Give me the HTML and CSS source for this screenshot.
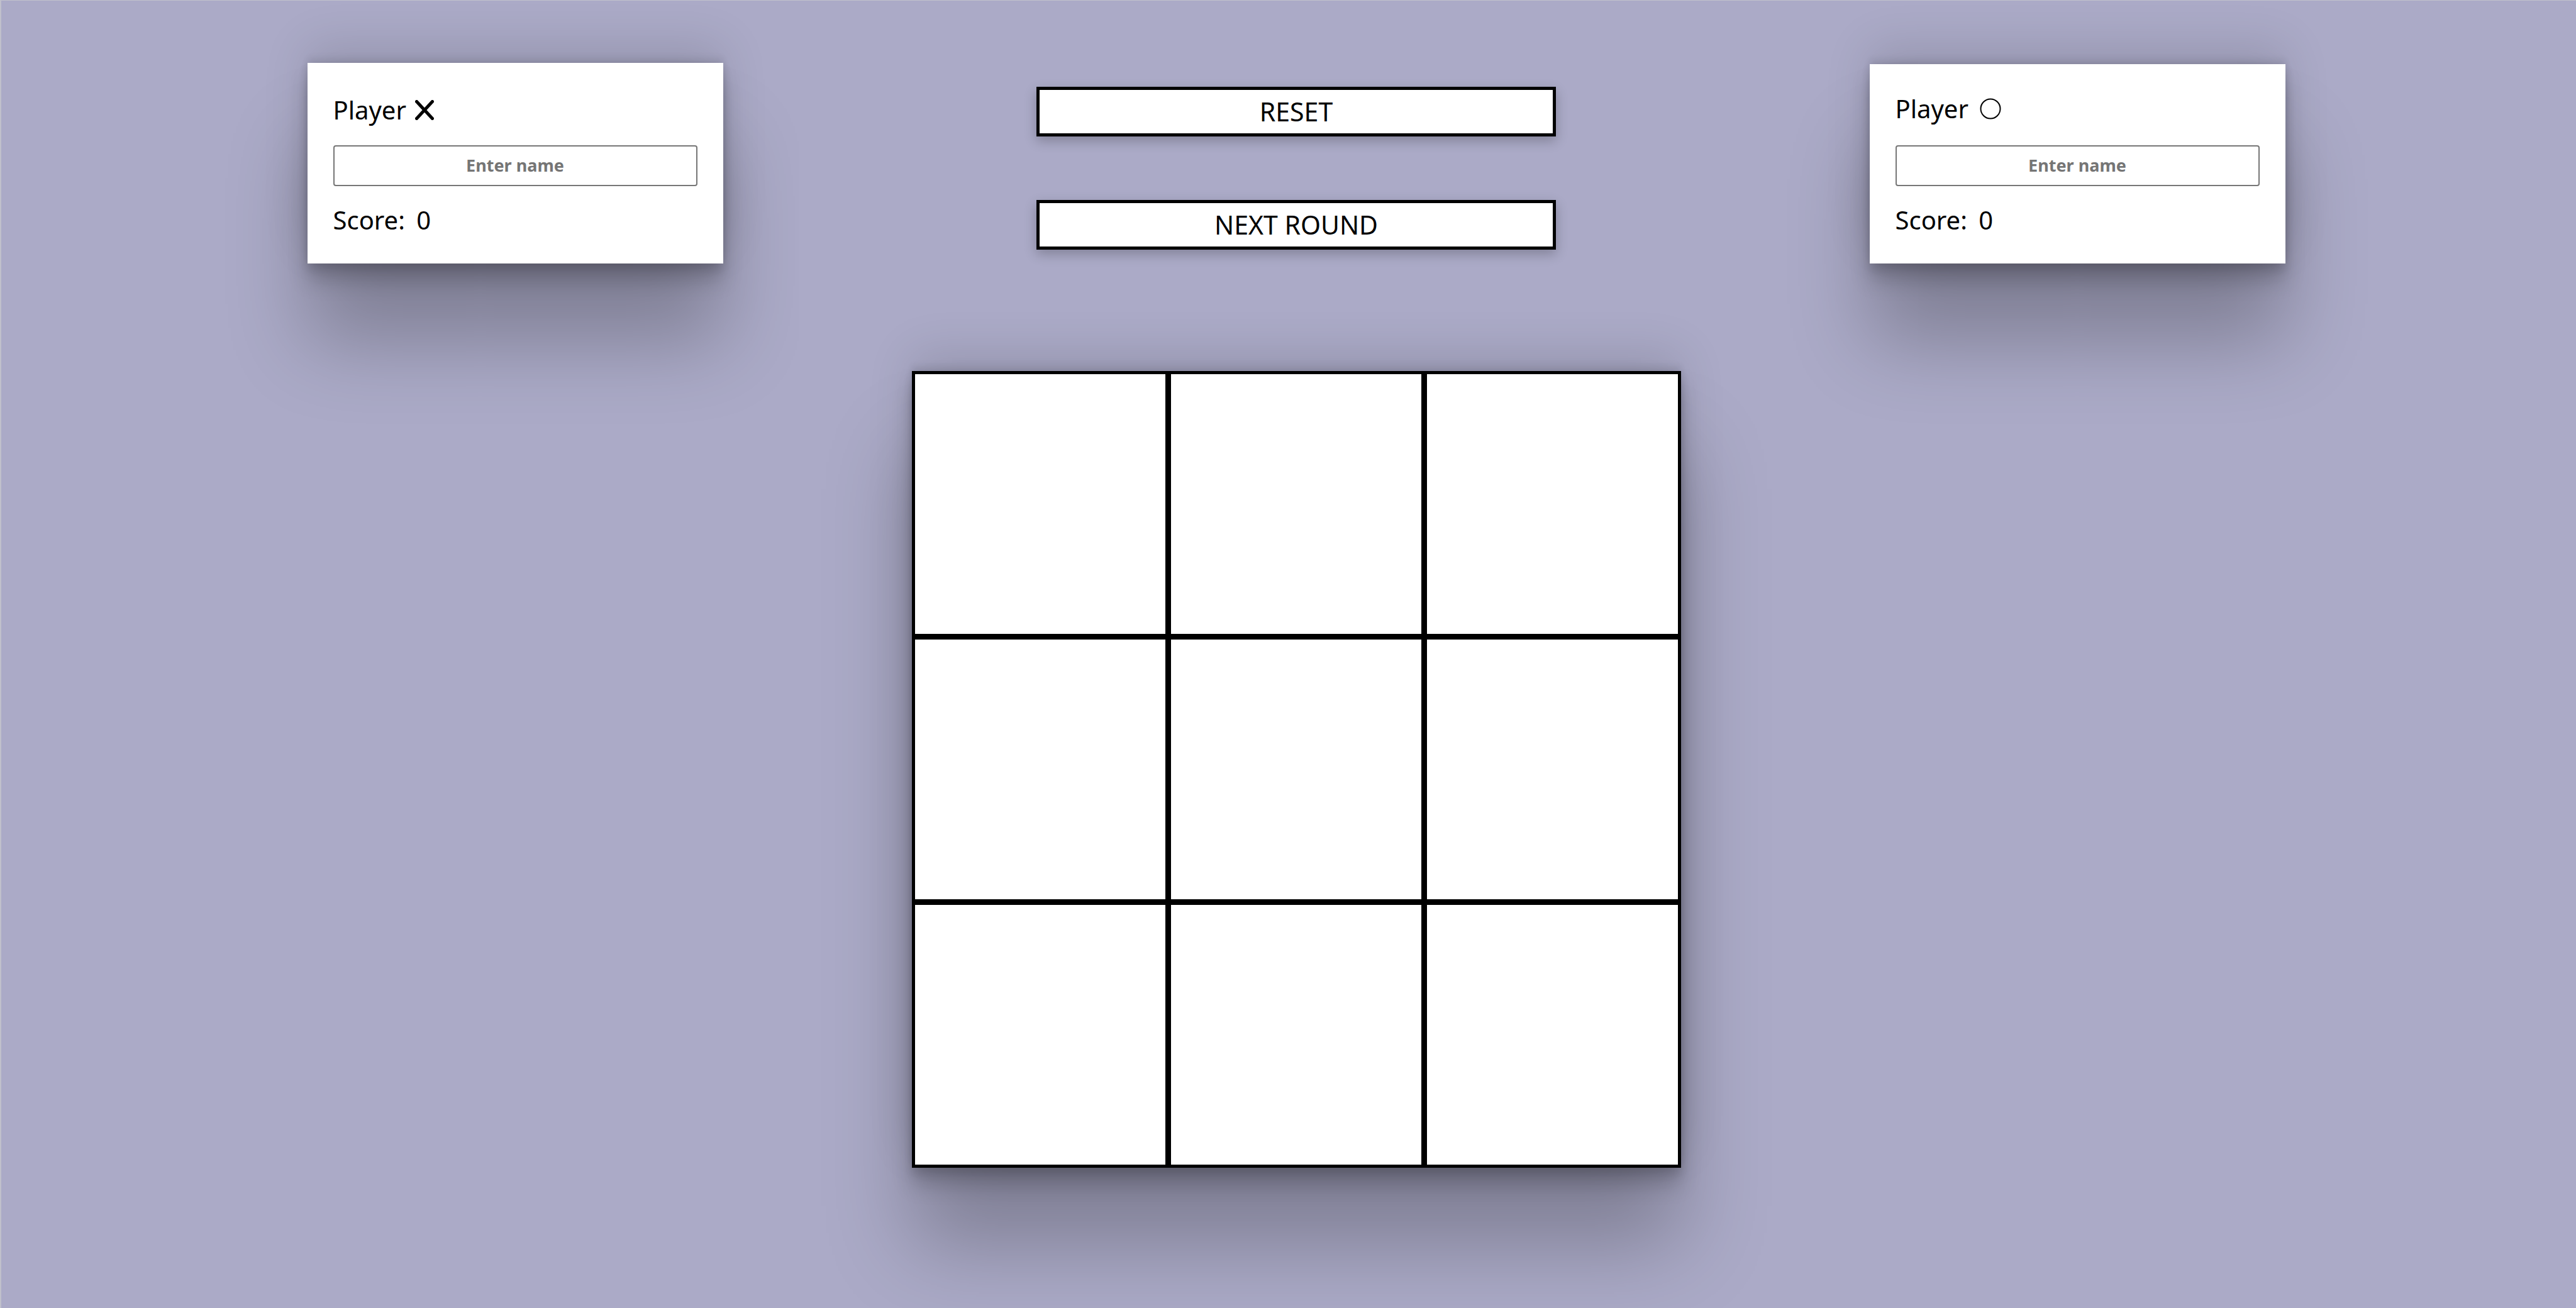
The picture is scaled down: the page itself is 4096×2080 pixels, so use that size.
FILE: index.html
```html
<!DOCTYPE html>
<html lang="en">
<head>
  <meta charset="utf-8">
  <title>Tic Tac Toe</title>
  <link rel="stylesheet" href="styles.css">
</head>
<body>
  <header class="top">
    <section class="card">
      <label class="player" for="name-x">Player
        <svg class="mark mark-x" viewBox="0 0 30 32" aria-hidden="true"><path d="M2.500 2.500L27.500 29.500M27.500 2.500L2.500 29.500"/></svg>
      </label>
      <input class="name" id="name-x" type="text" placeholder="Enter name">
      <p class="score">Score: <span class="points">0</span></p>
    </section>
    <div class="controls">
      <button class="btn" type="button">RESET</button>
      <button class="btn" type="button">NEXT ROUND</button>
    </div>
    <section class="card card-o">
      <label class="player" for="name-o">Player
        <svg class="mark mark-o" viewBox="0 0 34 34" aria-hidden="true"><circle cx="17" cy="17" r="15.500"/></svg>
      </label>
      <input class="name" id="name-o" type="text" placeholder="Enter name">
      <p class="score">Score: <span class="points">0</span></p>
    </section>
  </header>
  <main class="board">
    <button class="cell" type="button" aria-label="Row 1, column 1"></button>
    <button class="cell" type="button" aria-label="Row 1, column 2"></button>
    <button class="cell" type="button" aria-label="Row 1, column 3"></button>
    <button class="cell" type="button" aria-label="Row 2, column 1"></button>
    <button class="cell" type="button" aria-label="Row 2, column 2"></button>
    <button class="cell" type="button" aria-label="Row 2, column 3"></button>
    <button class="cell" type="button" aria-label="Row 3, column 1"></button>
    <button class="cell" type="button" aria-label="Row 3, column 2"></button>
    <button class="cell" type="button" aria-label="Row 3, column 3"></button>
  </main>
</body>
</html>
```
FILE: styles.css
```css
* {
  box-sizing: border-box;
}

body {
  margin: 0;
  min-height: 100vh;
  padding: 99px 172px 0 196px;
  border-top: 1px solid #c0c0cc;
  border-left: 2px solid #c0c0cc;
  background: #abaac7;
  color: #000;
  font-family: "Noto Sans", "Open Sans", sans-serif;
  font-size: 40px;
  line-height: 56px;
}

.top {
  display: grid;
  grid-template-columns: repeat(3, 1fr);
  justify-items: center;
  align-items: end;
}

.card,
.board {
  box-shadow:
    0 124px 126px rgba(0, 0, 0, 0.25),
    0 -28px 69px rgba(0, 0, 0, 0.12),
    0 9px 14px rgba(0, 0, 0, 0.12),
    0 28px 30px rgba(0, 0, 0, 0.17),
    0 -7px 11px rgba(0, 0, 0, 0.09);
}

.card {
  display: flex;
  flex-direction: column;
  width: 661px;
  max-width: 100%;
  padding: 47px 41px 41px;
  background: #fff;
}

.card-o {
  padding-top: 43px;
}

.player {
  display: flex;
  align-items: center;
  gap: 14px;
}

.mark {
  fill: none;
  stroke: #000;
}

.mark-x {
  width: 30px;
  height: 32px;
  stroke-width: 5;
  stroke-linecap: round;
}

.mark-o {
  width: 34px;
  height: 34px;
  margin-left: 4px;
  stroke-width: 2;
}

.name {
  width: 100%;
  height: 65px;
  margin: 28px 0 26px;
  padding: 0 0 2px;
  border: 2px solid #767676;
  border-radius: 4px;
  background: #fff;
  font: bold 27px "Noto Sans", "Open Sans", sans-serif;
  text-align: center;
}

.card-o .name {
  margin-top: 30px;
}

.name::placeholder {
  color: #757575;
}

.score {
  margin: 0;
}

.points {
  margin-left: 8px;
}

.controls {
  display: flex;
  flex-direction: column;
  align-self: start;
  align-items: center;
  gap: 101px;
  width: 100%;
  padding-top: 38px;
}

.btn {
  width: 826px;
  max-width: 100%;
  padding: 6px;
  border: 5px solid #000;
  background: #fff;
  box-shadow: 0 7px 18px rgba(0, 0, 0, 0.24);
  color: #000;
  font: 41px/57px "Noto Sans", "Open Sans", sans-serif;
}

.board {
  display: grid;
  grid-template-columns: repeat(3, 1fr);
  grid-auto-rows: 413px;
  gap: 9px;
  width: 1223px;
  max-width: 100%;
  margin: 171px auto 0;
  padding: 5px;
  background: #000;
}

.cell {
  padding: 0;
  border: 0;
  background: #fff;
}
```
